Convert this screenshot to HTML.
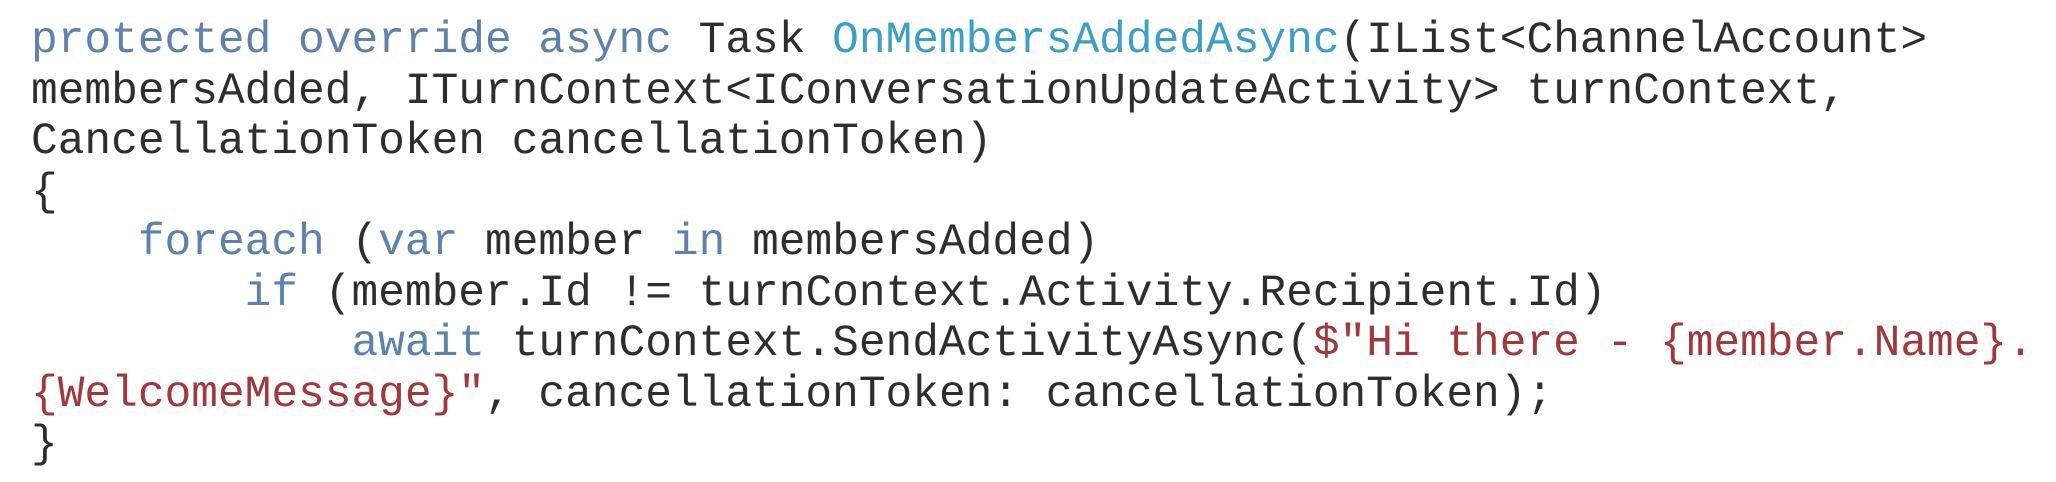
<!DOCTYPE html>
<html><head><meta charset="utf-8"><style>
html,body{margin:0;padding:0;background:#fff;width:2056px;height:482px;overflow:hidden}
pre{margin:0;position:absolute;left:31px;top:16px;font-family:"Liberation Mono",monospace;font-size:44.5px;line-height:50.5px;color:#2e2e2e;white-space:pre}
.k{color:#5b82b0}.m{color:#3aa0c8}.s{color:#a3383c}
</style></head><body>
<pre><span class="k">protected override async</span> Task <span class="m">OnMembersAddedAsync</span>(IList&lt;ChannelAccount&gt;
membersAdded, ITurnContext&lt;IConversationUpdateActivity&gt; turnContext,
CancellationToken cancellationToken)
{
    <span class="k">foreach</span> (<span class="k">var</span> member <span class="k">in</span> membersAdded)
        <span class="k">if</span> (member.Id != turnContext.Activity.Recipient.Id)
            <span class="k">await</span> turnContext.SendActivityAsync(<span class="s">$"Hi there - {member.Name}.</span>
<span class="s">{WelcomeMessage}"</span>, cancellationToken: cancellationToken);
}</pre>
</body></html>
